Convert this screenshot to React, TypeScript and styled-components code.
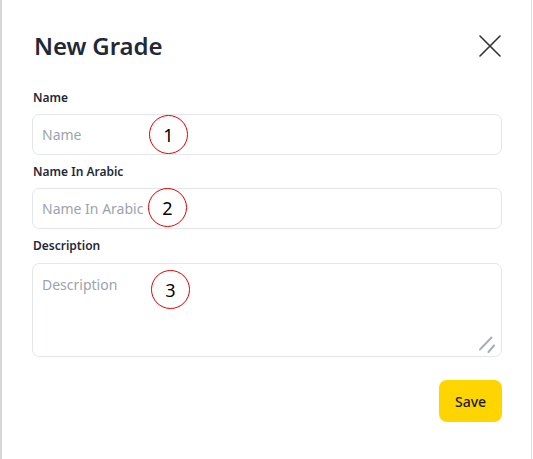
import React from 'react';
import styled, { createGlobalStyle } from 'styled-components';

const GlobalStyle = createGlobalStyle`
  html, body {
    margin: 0;
    padding: 0;
    background: #ffffff;
  }
  body {
    font-family: "Noto Sans", "Open Sans", Arial, sans-serif;
  }
`;

const Modal = styled.div`
  box-sizing: border-box;
  width: 532px;
  height: 459px;
  background: #ffffff;
  border-left: 2px solid #d6d6d6;
  border-right: 1px solid #dedede;
  padding: 30px 29px 0 30px;
  display: flex;
  flex-direction: column;
`;

const Header = styled.div`
  display: flex;
  align-items: center;
  justify-content: space-between;
  height: 32px;
  margin-bottom: 28px;
`;

const Title = styled.h2`
  margin: 0 0 0 2px;
  font-size: 24px;
  line-height: 32px;
  font-weight: 600;
  color: #1f2937;
  letter-spacing: -0.1px;
`;

const CloseButton = styled.button`
  border: none;
  background: transparent;
  padding: 0;
  margin-right: 1px;
  width: 22px;
  height: 22px;
  display: flex;
  align-items: center;
  justify-content: center;
  cursor: pointer;
  color: #333333;
`;

const Form = styled.form`
  display: flex;
  flex-direction: column;
  gap: 9px;
`;

const Field = styled.div`
  display: flex;
  flex-direction: column;
`;

const Label = styled.label<{ $space?: number }>`
  font-size: 12px;
  line-height: 16px;
  font-weight: 600;
  color: #1f2937;
  margin: 0 0 ${p => p.$space ?? 8}px 1px;
`;

const Control = styled.div`
  position: relative;
`;

const Input = styled.input`
  box-sizing: border-box;
  width: 100%;
  height: 41px;
  border: 1px solid #e3e6ea;
  border-radius: 7px;
  padding: 0 10px 0 9px;
  font-family: inherit;
  font-size: 14px;
  color: #1f2937;
  outline: none;
  &::placeholder {
    color: #9ca3af;
  }
`;

const TextArea = styled.textarea`
  box-sizing: border-box;
  display: block;
  width: 100%;
  height: 94px;
  border: 1px solid #e3e6ea;
  border-radius: 7px;
  padding: 11px 10px 0 9px;
  font-family: inherit;
  font-size: 14px;
  line-height: 20px;
  color: #1f2937;
  outline: none;
  resize: none;
  &::placeholder {
    color: #9ca3af;
  }
`;

const Grip = styled.svg`
  position: absolute;
  right: 6px;
  bottom: 4px;
  pointer-events: none;
`;

const Marker = styled.span<{ $left: number; $top: number }>`
  position: absolute;
  left: ${p => p.$left}px;
  top: ${p => p.$top}px;
  box-sizing: border-box;
  width: 39px;
  height: 39px;
  border: 1.6px solid #e50000;
  border-radius: 50%;
  display: flex;
  align-items: center;
  justify-content: center;
  font-size: 18px;
  color: #000000;
  pointer-events: none;
`;

const Actions = styled.div`
  display: flex;
  justify-content: flex-end;
  margin-top: 23px;
`;

const SaveButton = styled.button`
  width: 63px;
  height: 42px;
  border: none;
  border-radius: 8px;
  background: #ffd500;
  font-family: inherit;
  font-size: 14px;
  font-weight: 500;
  color: #1a1a1a;
  cursor: pointer;
`;

const CloseIcon = () => (
  <svg width="22" height="22" viewBox="0 0 22 22" fill="none">
    <path d="M1 1L21 21M21 1L1 21" stroke="currentColor" strokeWidth="1.6" strokeLinecap="round" />
  </svg>
);

const ResizeGrip = () => (
  <Grip width="18" height="18" viewBox="0 0 18 18" fill="none">
    <path d="M2 14.5L13.5 2.5M10.5 17L16 10.5" stroke="#a9afba" strokeWidth="2" strokeLinecap="round" />
  </Grip>
);

const App = () => (
  <>
    <GlobalStyle />
    <Modal>
      <Header>
        <Title>New Grade</Title>
        <CloseButton aria-label="Close">
          <CloseIcon />
        </CloseButton>
      </Header>
      <Form onSubmit={e => e.preventDefault()}>
        <Field>
          <Label>Name</Label>
          <Control>
            <Input placeholder="Name" />
            <Marker $left={117} $top={1}>1</Marker>
          </Control>
        </Field>
        <Field>
          <Label>Name In Arabic</Label>
          <Control>
            <Input placeholder="Name In Arabic" />
            <Marker $left={116} $top={0}>2</Marker>
          </Control>
        </Field>
        <Field>
          <Label $space={9}>Description</Label>
          <Control>
            <TextArea placeholder="Description" />
            <ResizeGrip />
            <Marker $left={119} $top={7}>3</Marker>
          </Control>
        </Field>
      </Form>
      <Actions>
        <SaveButton>Save</SaveButton>
      </Actions>
    </Modal>
  </>
);

export default App;
